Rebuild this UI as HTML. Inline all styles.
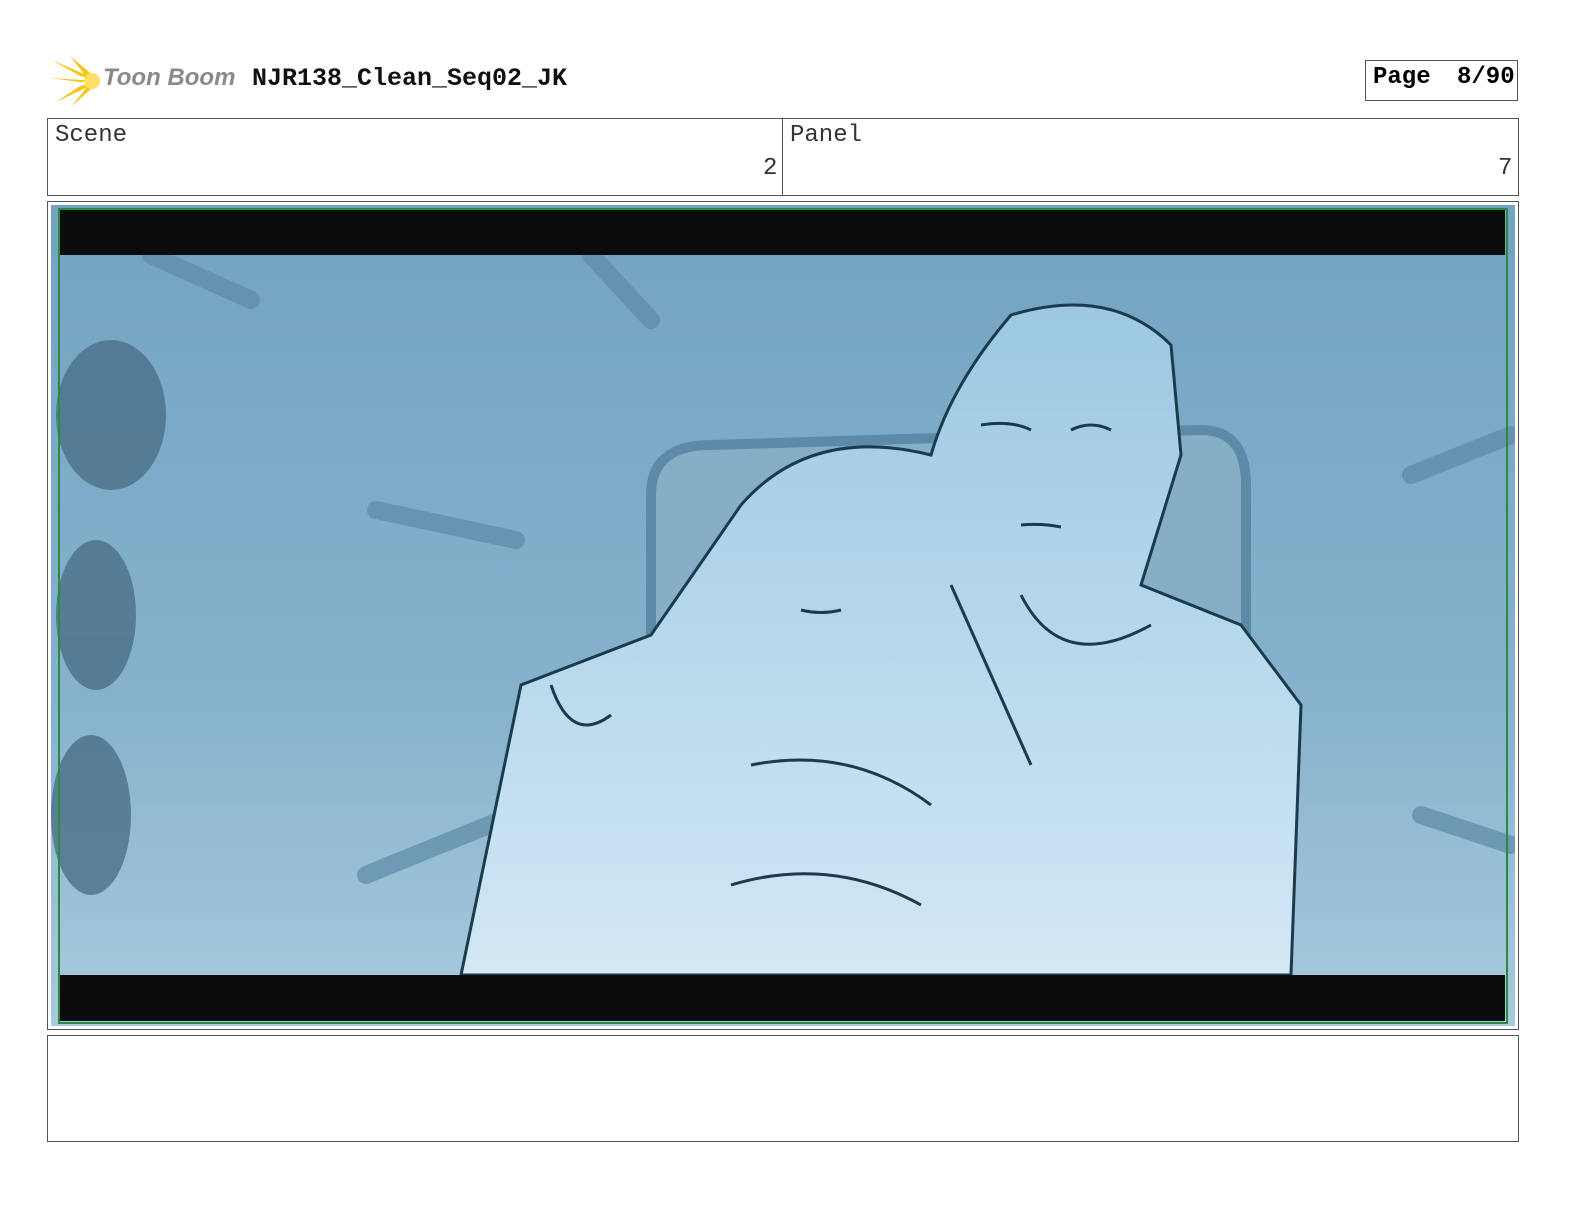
<!DOCTYPE html>
<html style="margin:0;padding:0;overflow:hidden;width:1584px;height:1224px"><head><style>
html,body{margin:0;padding:0;overflow:hidden}
body{width:1584px;height:1224px;background:#fff;position:relative;font-family:"Liberation Mono",monospace}
.a{position:absolute}
.box{position:absolute;border:1px solid #555;box-sizing:border-box}
</style></head><body>
<svg class="a" style="left:50px;top:56px" width="52" height="50" viewBox="0 0 52 50">
<g fill="#f5c518"><path d="M50 25 L2 4 L30 20Z"/><path d="M50 25 L0 22 L30 26Z"/><path d="M50 25 L6 46 L30 30Z"/><path d="M50 25 L20 0 L34 18Z"/><path d="M50 25 L22 50 L36 32Z"/></g>
<circle cx="42" cy="25" r="8" fill="#ffe066"/></svg>
<div class="a" style="left:103px;top:64px;font:italic bold 24px 'Liberation Sans',sans-serif;color:#8a8a8a">Toon Boom</div>
<div class="a" style="left:252px;top:64px;font-weight:bold;font-size:25px;color:#111">NJR138_Clean_Seq02_JK</div>
<div class="box" style="left:1365px;top:60px;width:153px;height:41px"></div>
<div class="a" style="left:1373px;top:64px;font-weight:bold;font-size:24px">Page</div>
<div class="a" style="left:1457px;top:64px;font-weight:bold;font-size:24px">8/90</div>
<div class="box" style="left:47px;top:118px;width:1472px;height:78px"></div>
<div class="a" style="left:782px;top:118px;width:1px;height:78px;background:#555"></div>
<div class="a" style="left:55px;top:122px;font-size:24px;color:#333">Scene</div>
<div class="a" style="left:763px;top:155px;font-size:24px;color:#333">2</div>
<div class="a" style="left:790px;top:122px;font-size:24px;color:#333">Panel</div>
<div class="a" style="left:1498px;top:155px;font-size:24px;color:#333">7</div>
<div class="box" style="left:47px;top:201px;width:1472px;height:829px"></div>
<svg class="a" style="left:51px;top:205px" width="1464" height="821" viewBox="0 0 1464 821">
<defs><linearGradient id="g" x1="0" y1="0" x2="0" y2="1"><stop offset="0" stop-color="#73a3c2"/><stop offset="0.6" stop-color="#86b2cc"/><stop offset="1" stop-color="#a9cadd"/></linearGradient>
<linearGradient id="f" x1="0" y1="0" x2="0" y2="1"><stop offset="0" stop-color="#9cc8e2"/><stop offset="1" stop-color="#d2e8f5"/></linearGradient></defs>
<rect width="1464" height="821" fill="url(#g)"/>
<g fill="none" stroke="#5d8aa6" stroke-width="18" stroke-linecap="round" opacity=".7">
<path d="M325 305 L465 335"/><path d="M315 670 L450 615"/><path d="M1360 270 L1460 230"/><path d="M1370 610 L1460 640"/><path d="M540 50 L600 115"/><path d="M100 50 L200 95"/></g>
<g fill="#4b6f88" opacity=".8"><ellipse cx="60" cy="210" rx="55" ry="75"/><ellipse cx="45" cy="410" rx="40" ry="75"/><ellipse cx="40" cy="610" rx="40" ry="80"/></g>
<path d="M600 290 Q600 240 660 240 L1150 225 Q1195 225 1195 280 L1195 430 L600 430Z" fill="#86aec6" stroke="#5d8aa6" stroke-width="10"/>
<path d="M410 770 L470 480 L600 430 L690 300 Q760 220 880 250 Q900 180 960 110 Q1060 80 1120 140 L1130 250 L1090 380 L1190 420 L1250 500 L1240 770Z" fill="url(#f)" stroke="#1a3a4e" stroke-width="3"/>
<g fill="none" stroke="#1a3a4e" stroke-width="3">
<path d="M930 220 Q960 215 980 225"/><path d="M1020 225 Q1040 215 1060 225"/><path d="M970 320 Q990 318 1010 322"/>
<path d="M750 405 Q770 410 790 405"/><path d="M970 390 Q1010 470 1100 420"/><path d="M700 560 Q800 540 880 600"/>
<path d="M500 480 Q520 540 560 510"/><path d="M900 380 L980 560"/><path d="M680 680 Q780 650 870 700"/></g>
<rect x="9" y="5" width="1445" height="45" fill="#0a0c0d"/>
<rect x="9" y="770" width="1445" height="46" fill="#0a0c0d"/>
<rect x="8" y="4" width="1448" height="814" fill="none" stroke="#2a8a40" stroke-width="2"/>
</svg>
<div class="box" style="left:47px;top:1035px;width:1472px;height:107px"></div>
</body></html>
